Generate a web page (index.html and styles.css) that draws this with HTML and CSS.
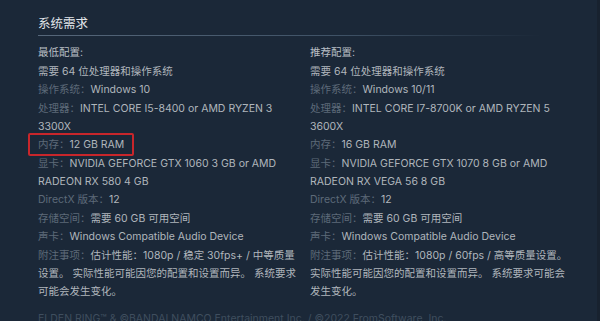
FILE: index.html
```html
<!DOCTYPE html>
<html lang="zh-CN">
<head>
<meta charset="utf-8">
<link rel="stylesheet" href="styles.css">
</head>
<body>
<div class="page">
  <h2 class="title">系统需求</h2>
  <div class="cols">
    <div class="col">
      <ul class="reqs">
        <li class="head">最低配置:</li>
        <li>需要 64 位处理器和操作系统</li>
        <li><span class="lbl">操作系统：</span>Windows 10</li>
        <li><span class="lbl">处理器：</span>INTEL CORE I5-8400 or AMD RYZEN 3 3300X</li>
        <li><span class="mark"><span class="lbl">内存：</span>12 GB RAM</span></li>
        <li><span class="lbl">显卡：</span>NVIDIA GEFORCE GTX 1060 3 GB or AMD RADEON RX 580 4 GB</li>
        <li><span class="lbl">DirectX 版本：</span>12</li>
        <li><span class="lbl">存储空间：</span>需要 60 GB 可用空间</li>
        <li><span class="lbl">声卡：</span>Windows Compatible Audio Device</li>
        <li><span class="lbl">附注事项：</span>估计性能：1080p / 稳定 30fps+ / 中等质量设置。 实际性能可能因您的配置和设置而异。 系统要求可能会发生变化。</li>
      </ul>
    </div>
    <div class="col">
      <ul class="reqs">
        <li class="head">推荐配置:</li>
        <li>需要 64 位处理器和操作系统</li>
        <li><span class="lbl">操作系统：</span>Windows 10/11</li>
        <li><span class="lbl">处理器：</span>INTEL CORE I7-8700K or AMD RYZEN 5 3600X</li>
        <li><span class="lbl">内存：</span>16 GB RAM</li>
        <li><span class="lbl">显卡：</span>NVIDIA GEFORCE GTX 1070 8 GB or AMD RADEON RX VEGA 56 8 GB</li>
        <li><span class="lbl">DirectX 版本：</span>12</li>
        <li><span class="lbl">存储空间：</span>需要 60 GB 可用空间</li>
        <li><span class="lbl">声卡：</span>Windows Compatible Audio Device</li>
        <li><span class="lbl">附注事项：</span>估计性能：1080p / 60fps / 高等质量设置。 实际性能可能因您的配置和设置而异。 系统要求可能会发生变化。</li>
      </ul>
    </div>
  </div>
  <p class="legal">ELDEN RING™ &amp; ©BANDAI NAMCO Entertainment Inc. / ©2022 FromSoftware, Inc.</p>
</div>
</body>
</html>
```

FILE: styles.css
```css
html, body {
  margin: 0;
  padding: 0;
  background: #1b2838;
}
body {
  font-family: "Inter", "Noto Sans CJK SC", sans-serif;
  font-size: 10.5px;
  color: #b0b6bc;
  overflow: hidden;
  height: 321px;
  box-shadow: inset -3px 0 0 #18222f;
}
.page {
  padding: 15px 0 0 38px;
  width: 600px;
  box-sizing: border-box;
}
.title {
  margin: 0;
  font-size: 12.5px;
  font-weight: normal;
  line-height: 18px;
  color: #e2e6ea;
  padding-bottom: 2px;
  width: 502px;
  border-bottom: 1px solid transparent;
  border-image: linear-gradient(to right, #56677a 0%, #3f5266 60%, rgba(63, 82, 102, 0) 100%) 1;
}
.cols {
  display: flex;
  gap: 8px;
  margin-top: 8px;
}
.col {
  width: 264px;
}
.reqs {
  list-style: none;
  margin: 0;
  padding: 0;
}
.reqs li {
  line-height: 18px;
  margin-bottom: 0.5px;
}
.reqs li.head {
  color: #b8bec4;
}
.lbl {
  color: #5d6a78;
}
.mark {
  position: relative;
}
.mark::before {
  content: "";
  position: absolute;
  left: -10px;
  top: -5px;
  right: -10px;
  bottom: -5px;
  border: 2px solid #c8262b;
  border-radius: 2px;
}
.legal {
  margin: 9px 0 0;
  line-height: 18px;
  color: #3f4e5e;
  white-space: nowrap;
}
```
